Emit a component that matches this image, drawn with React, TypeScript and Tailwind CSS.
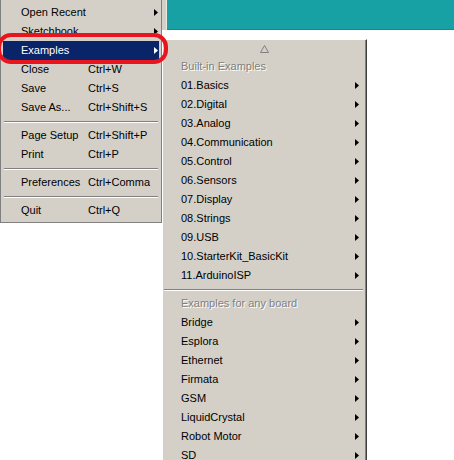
import React from 'react'

type Item =
  | { kind: 'item'; label: string; shortcut?: string; sub?: boolean; active?: boolean }
  | { kind: 'sep' }

const fileMenu: Item[] = [
  { kind: 'item', label: 'Open Recent', sub: true },
  { kind: 'item', label: 'Sketchbook', sub: true },
  { kind: 'item', label: 'Examples', sub: true, active: true },
  { kind: 'item', label: 'Close', shortcut: 'Ctrl+W' },
  { kind: 'item', label: 'Save', shortcut: 'Ctrl+S' },
  { kind: 'item', label: 'Save As...', shortcut: 'Ctrl+Shift+S' },
  { kind: 'sep' },
  { kind: 'item', label: 'Page Setup', shortcut: 'Ctrl+Shift+P' },
  { kind: 'item', label: 'Print', shortcut: 'Ctrl+P' },
  { kind: 'sep' },
  { kind: 'item', label: 'Preferences', shortcut: 'Ctrl+Comma' },
  { kind: 'sep' },
  { kind: 'item', label: 'Quit', shortcut: 'Ctrl+Q' },
]

const builtIn = [
  '01.Basics',
  '02.Digital',
  '03.Analog',
  '04.Communication',
  '05.Control',
  '06.Sensors',
  '07.Display',
  '08.Strings',
  '09.USB',
  '10.StarterKit_BasicKit',
  '11.ArduinoISP',
]

const anyBoard = ['Bridge', 'Esplora', 'Ethernet', 'Firmata', 'GSM', 'LiquidCrystal', 'Robot Motor', 'SD']

function Arrow() {
  return (
    <svg width="4" height="7" viewBox="0 0 4 7" className="shrink-0">
      <polygon points="0,0 4,3.5 0,7" fill="currentColor" />
    </svg>
  )
}

function Separator({ className }: { className: string }) {
  return (
    <div className={`h-[9px] pt-[4px] ${className}`}>
      <div className="h-px bg-[#808080]" />
      <div className="h-px bg-white" />
    </div>
  )
}

export default function App() {
  return (
    <div className="relative w-[454px] h-[460px] overflow-hidden bg-white font-['Tahoma','Liberation_Sans',sans-serif] text-[11px] text-black">
      {/* window behind the menus */}
      <div className="flex h-[30px]">
        <div className="w-[167px] bg-[#d4d0c8] border-r border-[#ece9e2]" />
        <div className="flex-1 bg-[#17a1a5] border-b border-[#118b8f]" />
      </div>

      {/* File menu */}
      <div className="absolute left-0 top-0 w-[162px] bg-[#d4d0c8] border-l border-r border-b border-[#808080] px-[2px] pt-[3px] pb-[2px]">
        {fileMenu.map((it, i) =>
          it.kind === 'sep' ? (
            <Separator key={i} className="mx-px" />
          ) : (
            <div
              key={i}
              className={`flex items-center h-[19px] pl-[18px] pr-px ${
                it.active ? 'bg-[#0a246a] text-white' : ''
              }`}
            >
              <span className="w-[67px] whitespace-nowrap">{it.label}</span>
              {it.shortcut && <span className="whitespace-nowrap">{it.shortcut}</span>}
              {it.sub && (
                <span className="ml-auto">
                  <Arrow />
                </span>
              )}
            </div>
          )
        )}
      </div>

      {/* Examples submenu */}
      <div className="absolute left-[162px] top-[39px] w-[205px] h-[440px] bg-[#d4d0c8] border-t border-l border-white border-r border-r-[#404040] shadow-[inset_-1px_0_0_#808080]">
        <div className="flex h-[17px] items-center justify-center">
          <svg width="9" height="8" viewBox="0 0 9 8">
            <polygon points="4.5,0.5 8.5,7.5 0.5,7.5" fill="none" stroke="#808080" strokeWidth="1" />
          </svg>
        </div>
        <div className="flex h-[19px] items-center pl-[18px] text-[#808080] [text-shadow:1px_1px_0_#ffffff]">
          Built-in Examples
        </div>
        {builtIn.map((name) => (
          <div key={name} className="flex h-[19px] items-center pl-[18px] pr-[7px]">
            <span className="whitespace-nowrap">{name}</span>
            <span className="ml-auto">
              <Arrow />
            </span>
          </div>
        ))}
        <Separator className="ml-px mr-[3px]" />
        <div className="flex h-[19px] items-center pl-[18px] text-[#808080] [text-shadow:1px_1px_0_#ffffff]">
          Examples for any board
        </div>
        {anyBoard.map((name) => (
          <div key={name} className="flex h-[19px] items-center pl-[18px] pr-[7px]">
            <span className="whitespace-nowrap">{name}</span>
            <span className="ml-auto">
              <Arrow />
            </span>
          </div>
        ))}
      </div>

      {/* red annotation around Examples */}
      <div className="absolute left-[-3px] top-[33px] w-[171px] h-[31px] rounded-[14px] border-[4px] border-[#e8151f]" />
    </div>
  )
}
